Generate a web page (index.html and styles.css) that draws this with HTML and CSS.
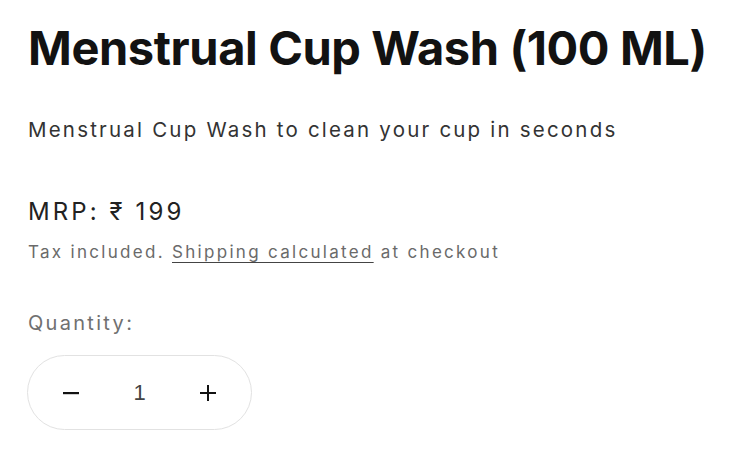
FILE: index.html
```html
<!DOCTYPE html>
<html lang="en">
<head>
<meta charset="utf-8">
<title>Menstrual Cup Wash (100 ML)</title>
<link rel="stylesheet" href="styles.css">
</head>
<body>
<main class="product">
  <h1 class="title">Menstrual Cup Wash (100 ML)</h1>
  <p class="desc">Menstrual Cup Wash to clean your cup in seconds</p>
  <div class="price">MRP: ₹ 199</div>
  <div class="tax">Tax included. <a href="#" class="link">Shipping calculated</a> at checkout</div>
  <label class="qty-label" for="qty">Quantity:</label>
  <div class="qty">
    <button class="qty-btn" type="button" aria-label="Decrease">
      <svg width="16" height="16" viewBox="0 0 16 16"><rect x="0" y="7" width="16" height="2.2" fill="#121212"/></svg>
    </button>
    <input class="qty-input" id="qty" type="text" value="1">
    <button class="qty-btn" type="button" aria-label="Increase">
      <svg width="16" height="16" viewBox="0 0 16 16"><rect x="0" y="7" width="16" height="2" fill="#121212"/><rect x="7" y="0" width="2" height="16" fill="#121212"/></svg>
    </button>
  </div>
</main>
</body>
</html>
```
FILE: styles.css
```css
html, body {
  margin: 0;
  padding: 0;
  background: #ffffff;
}
body {
  font-family: Inter, "Open Sans", sans-serif;
  color: #121212;
}
.product {
  padding: 0 0 0 28px;
  display: flex;
  flex-direction: column;
  align-items: flex-start;
}
.title {
  margin: 18px 0 0 0;
  font-size: 47px;
  line-height: 60px;
  font-weight: 700;
  letter-spacing: -0.4px;
  color: #121212;
}
.desc {
  margin: 38px 0 0 0;
  font-size: 20.5px;
  line-height: 28px;
  color: #333333;
  letter-spacing: 2.2px;
}
.price {
  margin: 53px 0 0 0;
  font-size: 24px;
  line-height: 30px;
  color: #222222;
  letter-spacing: 3.1px;
}
.tax {
  margin: 12px 0 0 0;
  font-size: 17px;
  line-height: 26px;
  color: #6a6a6a;
  letter-spacing: 2.3px;
}
.link {
  color: #6a6a6a;
  text-decoration: underline;
  text-underline-offset: 4px;
  text-decoration-thickness: 1px;
  text-decoration-color: #444;
}
.qty-label {
  margin: 44px 0 0 0;
  font-size: 20px;
  line-height: 28px;
  color: #707070;
  letter-spacing: 2.3px;
}
.qty {
  margin: 18px 0 0 -1px;
  width: 225px;
  height: 75px;
  box-sizing: border-box;
  border: 1px solid #e2e2e2;
  border-radius: 38px;
  display: flex;
  align-items: center;
  justify-content: space-between;
  padding: 0 27px;
}
.qty-btn {
  background: none;
  border: 0;
  padding: 0;
  width: 32px;
  height: 32px;
  display: flex;
  align-items: center;
  justify-content: center;
}
.qty-input {
  width: 60px;
  border: 0;
  outline: none;
  text-align: center;
  font-family: "Liberation Sans", Arial, sans-serif;
  font-size: 22px;
  color: #444444;
  background: transparent;
  padding: 0;
}
```
